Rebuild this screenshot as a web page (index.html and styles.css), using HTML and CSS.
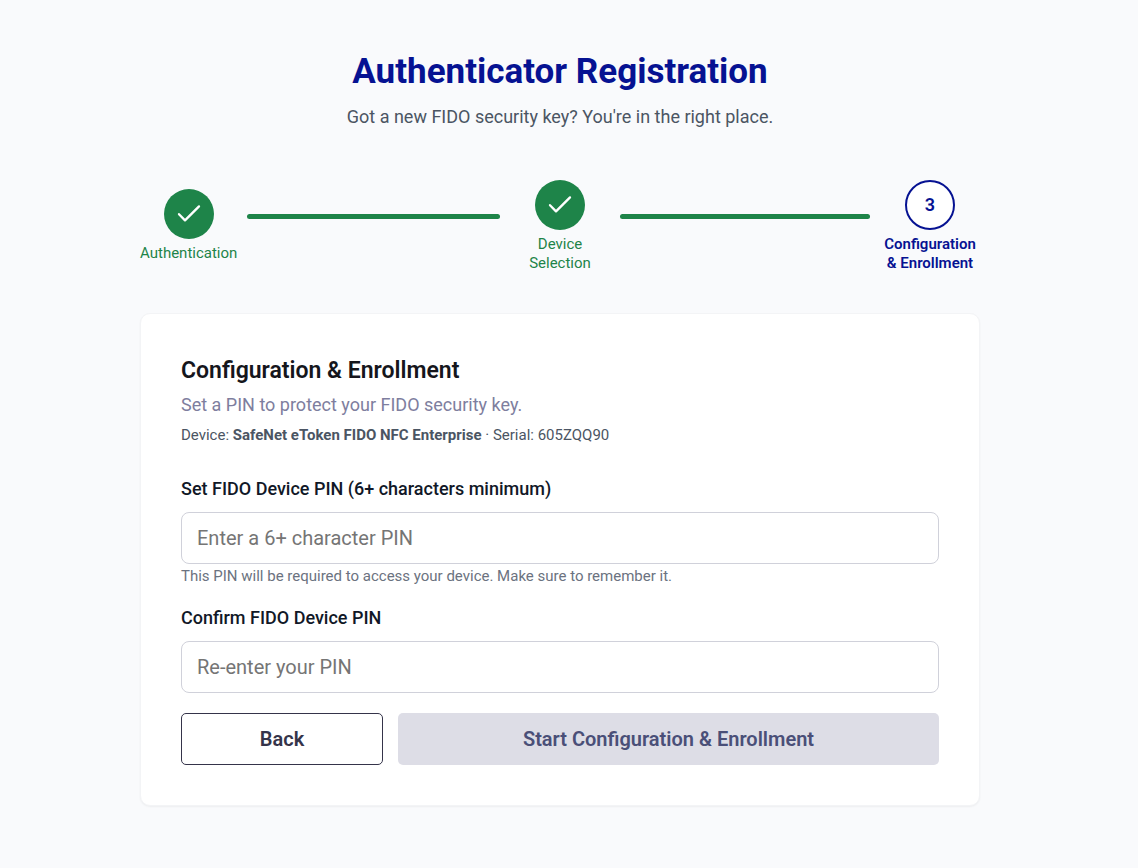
FILE: index.html
```html
<!DOCTYPE html>
<html lang="en">
<head>
  <meta charset="UTF-8" />
  <meta name="viewport" content="width=device-width, initial-scale=1.0"/>
  <title>Authenticator Registration</title>
  <link rel="stylesheet" href="styles.css">
</head>
<body>

  <main class="page">
    <header class="page-header">
      <h1>Authenticator Registration</h1>
      <p>Got a new FIDO security key? You're in the right place.</p>
    </header>

    <div class="stepper">
      <div class="stepper-side">
        <div class="step done">
          <span class="step-circle">
            <svg viewBox="0 0 24 24" width="24" height="24" aria-hidden="true"><path d="M2 12.2 L8 18.4 L22 4.4"/></svg>
          </span>
          <span class="step-label">Authentication</span>
        </div>
        <div class="step-line"></div>
      </div>

      <div class="step done">
        <span class="step-circle">
          <svg viewBox="0 0 24 24" width="24" height="24" aria-hidden="true"><path d="M2 12.2 L8 18.4 L22 4.4"/></svg>
        </span>
        <span class="step-label">Device<br>Selection</span>
      </div>

      <div class="stepper-side">
        <div class="step-line"></div>
        <div class="step current">
          <span class="step-circle">3</span>
          <span class="step-label">Configuration<br>&amp; Enrollment</span>
        </div>
      </div>
    </div>

    <form class="card">
      <h2>Configuration &amp; Enrollment</h2>
      <p class="subtitle">Set a PIN to protect your FIDO security key.</p>
      <p class="device">Device: <strong>SafeNet eToken FIDO NFC Enterprise</strong> · Serial: 605ZQQ90</p>

      <div class="field">
        <label for="pin">Set FIDO Device PIN (6+ characters minimum)</label>
        <input type="password" id="pin" placeholder="Enter a 6+ character PIN">
        <p class="hint">This PIN will be required to access your device. Make sure to remember it.</p>
      </div>

      <div class="field">
        <label for="confirmPin">Confirm FIDO Device PIN</label>
        <input type="password" id="confirmPin" placeholder="Re-enter your PIN">
      </div>

      <div class="actions">
        <button type="button" class="btn btn-back">Back</button>
        <button type="submit" class="btn btn-start" disabled>Start Configuration &amp; Enrollment</button>
      </div>
    </form>
  </main>

</body>
</html>
```
FILE: styles.css
```css
* {
  box-sizing: border-box;
}
body {
  font-family: Roboto, sans-serif;
  background: #f9fafc;
  margin: 0;
  padding: 48px 38px 48px 20px;
}
h1, h2, p {
  margin: 0;
}
.page {
  max-width: 840px;
  margin: 0 auto;
}

.page-header {
  text-align: center;
  margin-bottom: 50px;
}
h1 {
  color: #061292;
  font-size: 35px;
  line-height: 48px;
  font-weight: 700;
}
.page-header p {
  color: #4b5563;
  font-size: 18px;
  line-height: 26px;
  margin-top: 8px;
}

/* progress steps */
.stepper {
  display: grid;
  grid-template-columns: 1fr 100px 1fr;
  gap: 10px;
  align-items: center;
  margin-bottom: 40px;
}
.stepper-side {
  display: flex;
  align-items: center;
  gap: 10px;
}
.step {
  display: flex;
  flex-direction: column;
  align-items: center;
  gap: 5px;
  line-height: 1.25;
}
.step-circle {
  display: flex;
  align-items: center;
  justify-content: center;
  width: 50px;
  height: 50px;
  border-radius: 50%;
  font-size: 18px;
}
.step-circle svg {
  fill: none;
  stroke: #fff;
  stroke-width: 2.3;
  stroke-linecap: round;
  stroke-linejoin: round;
}
.step-label {
  font-size: 15px;
  text-align: center;
}
.step-line {
  flex: 1;
  height: 5px;
  margin-bottom: 20px;
  border-radius: 3px;
  background: #1e8449;
}
.done .step-circle {
  background: #1e8449;
}
.done .step-label {
  color: #1e8449;
}
.current {
  width: 100px;
  color: #061292;
  font-weight: 600;
}
.current .step-circle {
  background: #fff;
  border: 2px solid #061292;
}

.card {
  background: #fff;
  border: 1px solid #f3f4f6;
  border-radius: 10px;
  box-shadow: 0 1px 2px rgba(0, 0, 0, 0.05);
  padding: 40px;
}
h2 {
  color: #15161c;
  font-size: 23px;
  line-height: 34px;
  font-weight: 600;
}
.subtitle {
  color: #7e7e9e;
  font-size: 18px;
  line-height: 28px;
  margin-top: 3px;
}
.device {
  color: #4b5563;
  font-size: 15px;
  line-height: 22px;
  margin: 5px 0 30px;
}

.field {
  margin-bottom: 20px;
}
.field label {
  display: block;
  color: #111827;
  font-size: 18px;
  line-height: 26px;
  font-weight: 500;
  margin-bottom: 10px;
}
.field input {
  display: block;
  width: 100%;
  height: 52px;
  padding: 0 15px;
  border: 1px solid #d0d1da;
  border-radius: 8px;
  background: #fff;
  font-family: inherit;
  font-size: 20px;
}
.hint {
  color: #6b7280;
  font-size: 15px;
  line-height: 18px;
  margin-top: 3px;
}

.actions {
  display: flex;
  gap: 15px;
}
.btn {
  height: 52px;
  border-radius: 5px;
  font-family: inherit;
  font-size: 20px;
  font-weight: 600;
}
.btn-back {
  flex: 0 0 202px;
  background: #fff;
  border: 1px solid #35344a;
  color: #35344a;
}
.btn-start {
  flex: 1;
  background: #dddde6;
  border: none;
  color: #4a4f78;
}
```
